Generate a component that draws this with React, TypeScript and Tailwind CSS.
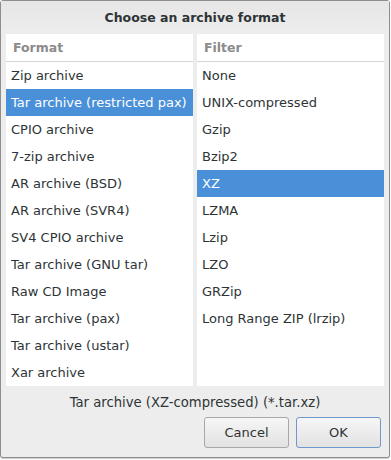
import React from "react";

const formats = [
  "Zip archive",
  "Tar archive (restricted pax)",
  "CPIO archive",
  "7-zip archive",
  "AR archive (BSD)",
  "AR archive (SVR4)",
  "SV4 CPIO archive",
  "Tar archive (GNU tar)",
  "Raw CD Image",
  "Tar archive (pax)",
  "Tar archive (ustar)",
  "Xar archive",
];

const filters = [
  "None",
  "UNIX-compressed",
  "Gzip",
  "Bzip2",
  "XZ",
  "LZMA",
  "Lzip",
  "LZO",
  "GRZip",
  "Long Range ZIP (lrzip)",
];

function Panel({ title, items, selected }: { title: string; items: string[]; selected: number }) {
  return (
    <div className="w-[187px] h-[352px] bg-white flex flex-col">
      <div className="h-[28px] flex items-center pl-[7px] pt-[1px] font-bold text-[12.5px] text-[#8b8b8b] border-b border-[#d5d5d5] shrink-0">
        {title}
      </div>
      {items.map((it, i) => (
        <div
          key={it}
          className={
            "h-[27px] shrink-0 flex items-center pl-[5px] pt-[1px] whitespace-nowrap " +
            (i === selected ? "bg-[#4a90d9] text-white" : "text-[#2e3436]")
          }
        >
          {it}
        </div>
      ))}
    </div>
  );
}

export default function App() {
  return (
    <div
      className="w-[391px] h-[460px] bg-white"
      style={{ fontFamily: '"DejaVu Sans", sans-serif' }}
    >
      <div className="w-[390px] h-[458px] border border-[#8e8e8e] rounded-[3px] bg-[#ededed] flex flex-col text-[13px] shadow-[0_1px_1px_rgba(0,0,0,0.2)]">
        <div className="h-[33px] shrink-0 flex items-center justify-center pt-[1px] font-bold text-[12.5px] text-[#2e3436] bg-gradient-to-b from-[#e6e6e6] to-[#ededed]">
          Choose an archive format
        </div>
        <div className="flex gap-[4px] pl-[5px]">
          <Panel title="Format" items={formats} selected={1} />
          <Panel title="Filter" items={filters} selected={4} />
        </div>
        <div className="h-[31px] flex items-center justify-center pt-[3px] text-[#2e3436] text-[13.2px]">
          Tar archive (XZ-compressed) (*.tar.xz)
        </div>
        <div className="flex justify-end gap-[7px] pr-[8px]">
          <button className="w-[85px] h-[31px] rounded-[3px] border border-[#a8a8a8] bg-gradient-to-b from-[#f6f6f6] to-[#e2e2e2] text-[#2e3436]">
            Cancel
          </button>
          <button className="w-[85px] h-[31px] rounded-[3px] border border-[#6f98cc] bg-gradient-to-b from-[#f6f6f6] to-[#e2e2e2] text-[#2e3436]">
            OK
          </button>
        </div>
      </div>
    </div>
  );
}
